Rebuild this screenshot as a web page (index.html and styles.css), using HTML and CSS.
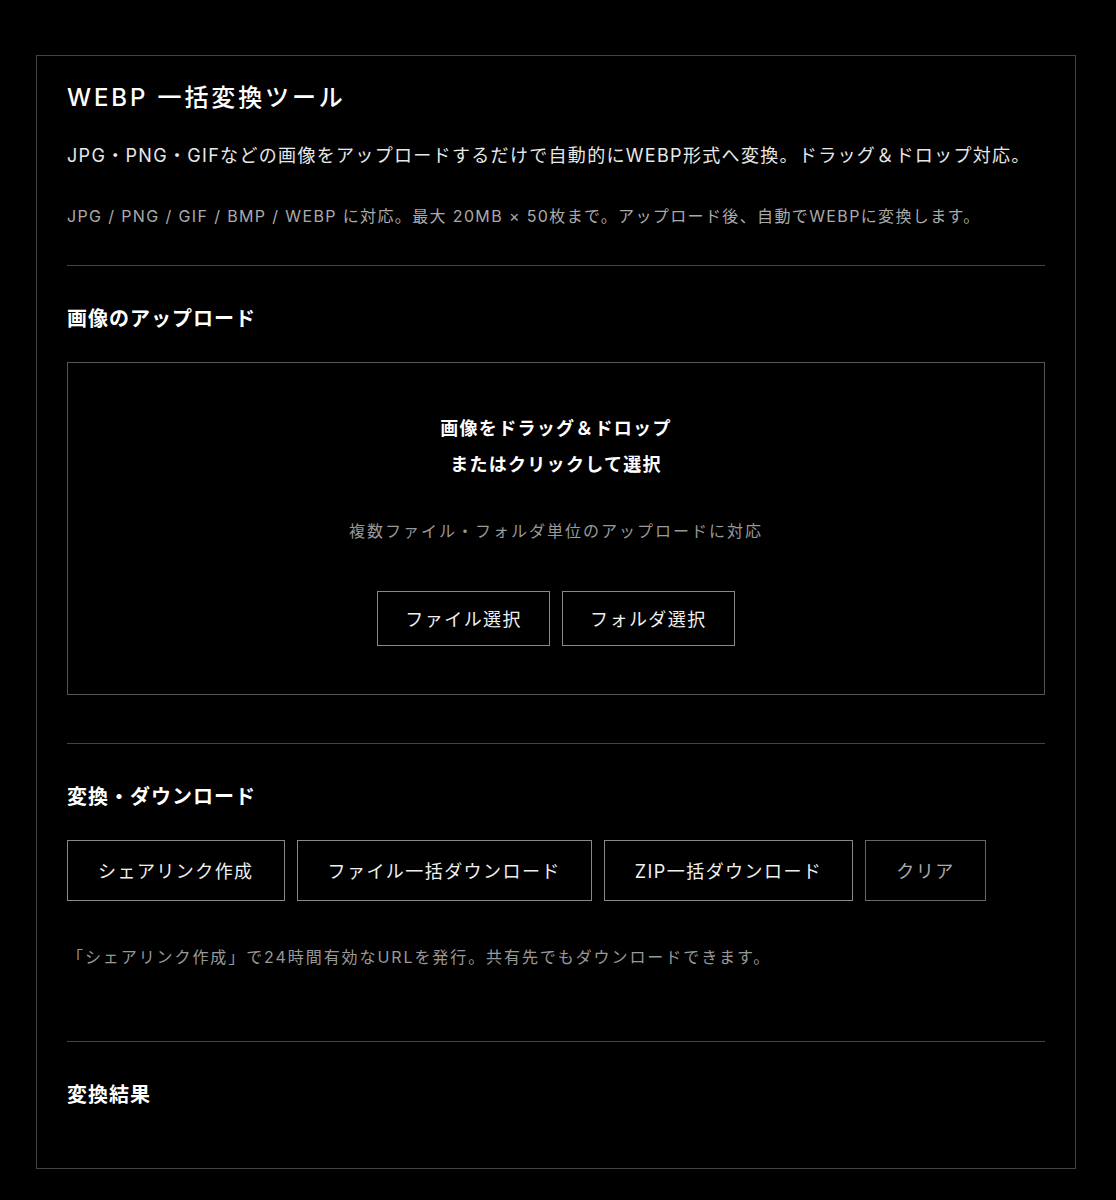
FILE: index.html
```html
<!DOCTYPE html>
<html lang="ja">
<head>
<meta charset="utf-8">
<title>WEBP 一括変換ツール</title>
<link rel="stylesheet" href="styles.css">
</head>
<body>
<div class="page">
  <main class="card">
    <header class="intro">
      <h1 class="title">WEBP 一括変換ツール</h1>
      <p class="lead">JPG・PNG・GIFなどの画像をアップロードするだけで自動的にWEBP形式へ変換。ドラッグ＆ドロップ対応。</p>
      <p class="meta">JPG / PNG / GIF / BMP / WEBP に対応。最大 20MB × 50枚まで。アップロード後、自動でWEBPに変換します。</p>
    </header>

    <section class="section section-upload">
      <h2 class="section-title">画像のアップロード</h2>
      <div class="dropzone">
        <p class="drop-title">画像をドラッグ＆ドロップ<br>またはクリックして選択</p>
        <p class="drop-sub">複数ファイル・フォルダ単位のアップロードに対応</p>
        <div class="drop-actions">
          <button class="btn btn-sm" type="button">ファイル選択</button>
          <button class="btn btn-sm" type="button">フォルダ選択</button>
        </div>
      </div>
    </section>

    <section class="section section-download">
      <h2 class="section-title">変換・ダウンロード</h2>
      <div class="actions">
        <button class="btn" type="button">シェアリンク作成</button>
        <button class="btn" type="button">ファイル一括ダウンロード</button>
        <button class="btn" type="button">ZIP一括ダウンロード</button>
        <button class="btn btn-muted" type="button">クリア</button>
      </div>
      <p class="note">「シェアリンク作成」で24時間有効なURLを発行。共有先でもダウンロードできます。</p>
    </section>

    <section class="section section-results">
      <h2 class="section-title">変換結果</h2>
      <div class="results"></div>
    </section>
  </main>
</div>
</body>
</html>
```

FILE: styles.css
```css
* { box-sizing: border-box; }

html, body {
  margin: 0;
  padding: 0;
  background: #000;
}

body {
  font-family: Inter, "Noto Sans CJK JP", sans-serif;
  color: #fff;
  letter-spacing: 0.08em;
}

.page {
  padding: 55px 40px 30px 36px;
}

.card {
  width: 1040px;
  border: 1px solid #444;
  padding: 28px 30px 30px;
}

.title {
  margin: 0;
  font-size: 24px;
  font-weight: 500;
  line-height: 1.2;
  letter-spacing: 0.12em;
  color: #fff;
}

.lead {
  margin: 29px 0 0;
  font-size: 18px;
  line-height: 1.6;
  letter-spacing: 1.32px;
  color: #e8e8e8;
}

.meta {
  margin: 33px 0 0;
  font-size: 16px;
  line-height: 1.6;
  letter-spacing: 1.37px;
  color: #aaa;
}

.intro {
  padding-bottom: 36px;
}

.section {
  border-top: 1px solid #444;
  padding-top: 39px;
}

.section-title {
  margin: 0;
  font-size: 20px;
  font-weight: 700;
  line-height: 1.4;
  letter-spacing: 0.05em;
  color: #fff;
}

.section-upload {
  padding-bottom: 48px;
}

.dropzone {
  margin-top: 29px;
  border: 1px solid #555;
  padding: 48px 20px 48px;
  text-align: center;
}

.drop-title {
  margin: 0;
  font-size: 18px;
  font-weight: 700;
  line-height: 36px;
  color: #fff;
}

.drop-sub {
  margin: 36px 0 0;
  font-size: 16px;
  line-height: 1.6;
  letter-spacing: 0.125em;
  color: #999;
}

.drop-actions {
  margin-top: 46px;
  display: flex;
  justify-content: center;
  gap: 12px;
}

.btn {
  font-family: inherit;
  font-size: 18px;
  letter-spacing: 0.08em;
  background: transparent;
  color: #f0f0f0;
  border: 1px solid #888;
  border-radius: 0;
  height: 61px;
  padding: 0 30px;
  cursor: pointer;
}

.btn-sm {
  height: 55px;
  padding: 0 27px;
}

.btn-muted {
  color: #aaa;
  border-color: #666;
}

.actions {
  margin-top: 29px;
  display: flex;
  gap: 12px;
}

.note {
  margin: 44px 0 0;
  font-size: 16px;
  line-height: 1.6;
  letter-spacing: 0.12em;
  color: #999;
}

.section-download {
  padding-bottom: 71px;
}

.results {
  min-height: 29px;
}
```
